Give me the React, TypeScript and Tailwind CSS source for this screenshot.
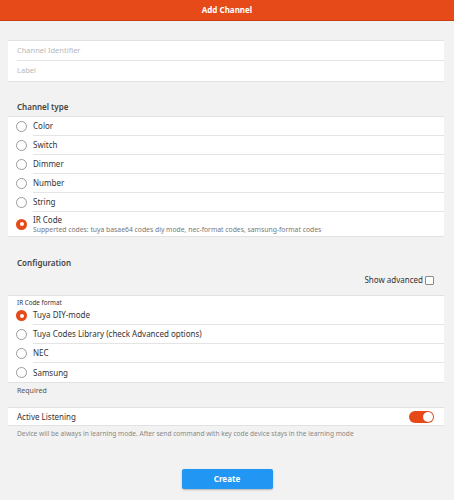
import React from 'react';

const Radio: React.FC<{ checked?: boolean }> = ({ checked }) =>
  checked ? (
    <span className="box-border flex items-center justify-center w-[11px] h-[11px] rounded-full bg-[#e64a19] shrink-0">
      <span className="w-[4px] h-[4px] rounded-full bg-white" />
    </span>
  ) : (
    <span className="box-border w-[11px] h-[11px] rounded-full border border-[#9a9a9a] bg-white shrink-0" />
  );

const RadioRow: React.FC<{ label: string; checked?: boolean; last?: boolean; sub?: string }> = ({ label, checked, last, sub }) => (
  <div className="flex items-center pl-[8px]">
    <Radio checked={checked} />
    <div className={`flex-1 ml-[6px] flex flex-col justify-center ${sub ? 'h-[24px]' : 'h-[19px]'} ${last ? '' : 'border-b border-[#e4e4e4]'}`}>
      <span className="text-[8px] leading-[10px] text-[#333]">{label}</span>
      {sub && <span className="text-[6.8px] leading-[9px] text-[#777]">{sub}</span>}
    </div>
  </div>
);

const App: React.FC = () => {
  return (
    <div className="w-[454px] h-[500px] bg-[#f2f2f2] font-['Noto_Sans',sans-serif] overflow-hidden">
      <header className="h-[21px] bg-[#e64a19] border-b border-[#c93d12] flex items-center justify-center">
        <span className="text-white text-[8px] font-bold">Add Channel</span>
      </header>

      <main className="pl-2 pr-[10px] pt-[19px]">
        <div className="bg-white border-y border-[#e2e2e2]">
          <div className="ml-[9px] h-[20px] flex items-center border-b border-[#e4e4e4] text-[7.5px] text-[#b8b8b8]">Channel Identifier</div>
          <div className="ml-[9px] h-[20px] flex items-center text-[7.5px] text-[#b8b8b8]">Label</div>
        </div>

        <div className="pl-[9px] mt-[15px] h-[19px] flex items-center text-[8px] font-semibold text-[#444]">Channel type</div>

        <div className="bg-white border-y border-[#e2e2e2]">
          <RadioRow label="Color" />
          <RadioRow label="Switch" />
          <RadioRow label="Dimmer" />
          <RadioRow label="Number" />
          <RadioRow label="String" />
          <RadioRow label="IR Code" checked last sub="Supperted codes: tuya basae64 codes diy mode, nec-format codes, samsung-format codes" />
        </div>

        <div className="pl-[9px] mt-[17px] h-[18px] flex items-center text-[8px] font-semibold text-[#444]">Configuration</div>

        <div className="flex items-center justify-end gap-[2px] pr-[10px] h-[16px] text-[8px] text-[#333]">
          Show advanced
          <span className="box-border w-[9px] h-[9px] border border-[#8a8a8a] rounded-[1px] bg-white" />
        </div>

        <div className="bg-white border-y border-[#e2e2e2] mt-[7px]">
          <div className="pl-[9px] pt-[2px] h-[10px] text-[6.3px] leading-[9px] text-[#333]">IR Code format</div>
          <RadioRow label="Tuya DIY-mode" checked />
          <RadioRow label="Tuya Codes Library (check Advanced options)" />
          <RadioRow label="NEC" />
          <RadioRow label="Samsung" last />
        </div>

        <div className="pl-[9px] h-[16px] flex items-center text-[7px] text-[#555]">Required</div>

        <div className="mt-[8px] bg-white border-y border-[#e2e2e2] h-[19px] flex items-center justify-between pl-[9px] pr-[10px]">
          <span className="text-[8px] text-[#333]">Active Listening</span>
          <span className="w-[25px] h-[12px] rounded-full bg-[#e64a19] flex items-center justify-end pr-[1px]">
            <span className="box-border w-[10px] h-[10px] rounded-full bg-white" />
          </span>
        </div>

        <div className="pl-[9px] h-[16px] flex items-center text-[6.6px] text-[#888]">
          Device will be always in learning mode. After send command with key code device stays in the learning mode
        </div>

        <div className="flex justify-center mt-[27px] pl-[2px]">
          <button className="w-[91px] h-[20px] rounded-[2px] bg-[#2196f3] text-white text-[8px] font-bold shadow-[0_1px_2px_rgba(0,0,0,0.25)]">
            Create
          </button>
        </div>
      </main>
    </div>
  );
};

export default App;
